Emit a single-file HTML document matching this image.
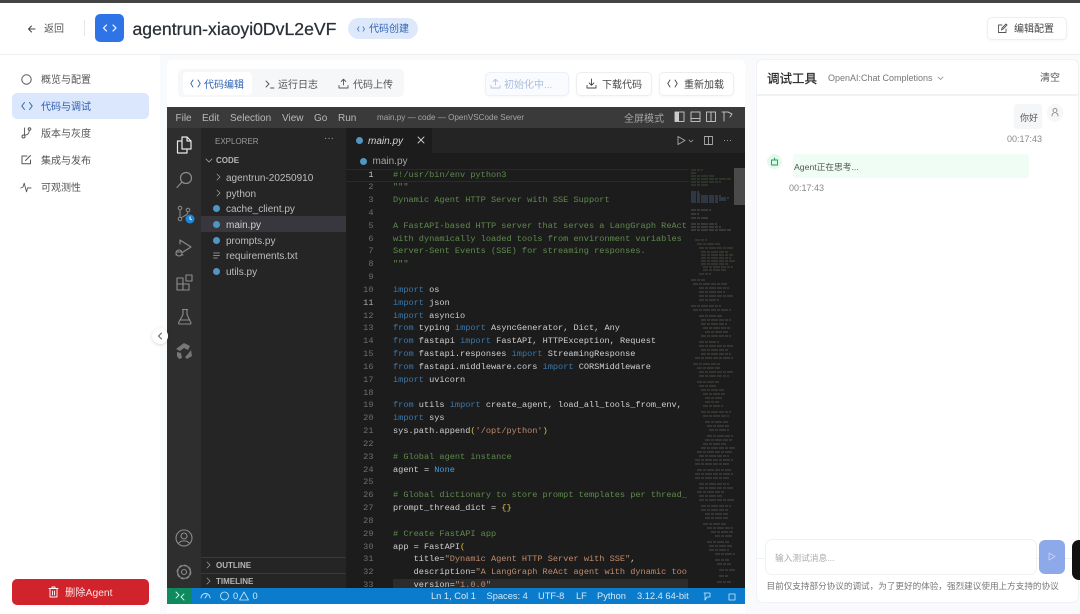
<!DOCTYPE html>
<html lang="zh"><head><meta charset="utf-8"><title>agentrun</title>
<style>
html,body{margin:0;padding:0;width:1080px;height:614px;overflow:hidden;background:#fff}
body{position:relative;font-family:"Liberation Sans","Noto Sans CJK SC",sans-serif;color:#444}
#w{position:absolute;left:0;top:0;width:1080px;height:614px;overflow:hidden;background:#fff;filter:blur(.3px)}
.a{position:absolute;white-space:nowrap}
.t{position:absolute;white-space:nowrap;line-height:14px;height:14px}
svg{position:absolute;overflow:visible}
.ln{fill:none;stroke:currentColor;stroke-linecap:round;stroke-linejoin:round}
.btn{position:absolute;background:#fff;border:1px solid #eceef1;border-radius:5px;box-sizing:border-box;box-shadow:0 1px 2px rgba(0,0,0,.04)}
.nav{font-size:10px;color:#555;left:41px}
.ex{font-size:10px;color:#bdbdbd;left:226px}
#code{position:absolute;left:393px;top:168.5px;width:295px;height:420px;overflow:hidden;margin:0;font:8.6px/12.83px "Liberation Mono",monospace;color:#cfcfcf}
#nums{position:absolute;left:346px;top:168.5px;width:27.5px;height:420px;overflow:hidden;margin:0;text-align:right;font:8.6px/12.83px "Liberation Mono",monospace;color:#6e6e6e}
.k{color:#3a78ad}.c{color:#5f8a4c}.s{color:#c08a6c}.b{color:#4a9ad4}.y{color:#e0c040}
.st{position:absolute;white-space:nowrap;font-size:9.3px;line-height:11px;color:#d5e8f7;top:591px}
.py{position:absolute;width:7px;height:7px;border-radius:50%;background:#4f97c2}
.m{position:absolute;white-space:nowrap;font-size:10px;color:#b8b8b8;top:112.500px}
</style></head><body><div id="w">
<div class="a" style="left:0;top:0;width:1080px;height:2.5px;background:#444"></div>
<div class="a" style="left:0;top:54px;width:1080px;height:1px;background:#eceef0"></div>
<div class="a" style="left:160px;top:55px;width:920px;height:559px;background:#f8fafc"></div>

<!-- header -->
<svg style="left:27px;top:24px" width="10" height="10" color="#444"><path class="ln" d="M8 5H1.500M4.500 2 1.500 5l3 3" stroke-width="1"/></svg>
<div class="t" style="left:44px;top:23px;font-size:10px;color:#555">返回</div>
<div class="a" style="left:84px;top:20px;width:1px;height:16px;background:#e5e7ea"></div>
<div class="a" style="left:95px;top:14px;width:29px;height:28px;border-radius:5px;background:#2f74e6"></div>
<svg style="left:102px;top:22px" width="16" height="12" color="#fff"><path class="ln" d="M4.500 3 1.500 6l3 3M11 3l3 3-3 3" stroke-width="1.200"/></svg>
<div class="a" style="left:132.500px;top:17px;font-size:17.650px;line-height:24px;color:#2a2f36;-webkit-text-stroke:.25px #2a2f36">agentrun-xiaoyi0DvL2eVF</div>
<div class="a" style="left:348px;top:18px;width:70px;height:21px;border-radius:11px;background:#dde9fb"></div>
<svg style="left:357px;top:26px" width="8" height="6" color="#3b6fc4"><path class="ln" d="M2 .8 .5 3 2 5.200M6 .8 7.500 3 6 5.200" stroke-width=".8"/></svg>
<div class="t" style="left:369px;top:23px;font-size:10px;color:#2f62b3">代码创建</div>
<div class="btn" style="left:987px;top:17px;width:80px;height:23px"></div>
<svg style="left:997px;top:23px" width="11" height="11" color="#555"><path class="ln" d="M9 6v3.500H1.500V2H5M4.500 7 5 5l4-4 1 1-4 4z" stroke-width=".9"/></svg>
<div class="t" style="left:1014px;top:23px;font-size:10px;color:#444">编辑配置</div>

<!-- left nav -->
<div class="a" style="left:12px;top:93px;width:137px;height:26px;border-radius:5px;background:#dae7fc"></div>
<svg style="left:21px;top:74px" width="11" height="11" color="#555"><circle class="ln" cx="5.500" cy="5.500" r="4.700" stroke-width="1"/></svg>
<div class="t nav" style="top:74px">概览与配置</div>
<svg style="left:21px;top:101px" width="12" height="10" color="#2f62b3"><path class="ln" d="M3.500 1.500 .8 5l2.700 3.500M8.500 1.500 11.200 5 8.500 8.500" stroke-width="1"/></svg>
<div class="t nav" style="top:101px;color:#2d5cb0">代码与调试</div>
<svg style="left:21px;top:127px" width="11" height="12" color="#555"><circle class="ln" cx="2.500" cy="9.500" r="1.500"/><circle class="ln" cx="8.500" cy="2" r="1.300"/><path class="ln" d="M3.500 1v7M3.500 8c4 0 4.500-2 4.800-4.500" stroke-width=".9"/></svg>
<div class="t nav" style="top:128px">版本与灰度</div>
<svg style="left:21px;top:154px" width="11" height="11" color="#555"><path class="ln" d="M9.500 6v3.800H1V2h5M4.500 6.500 9.500 1.500" stroke-width="1"/></svg>
<div class="t nav" style="top:155px">集成与发布</div>
<svg style="left:20px;top:182px" width="12" height="11" color="#555"><path class="ln" d="M.8 6 3 5l1.200-3.800 2.300 8.600 1.200-4 3.300.2" stroke-width=".9"/></svg>
<div class="t nav" style="top:182px">可观测性</div>
<div class="a" style="left:12px;top:579px;width:137px;height:26px;border-radius:5px;background:#d0232b"></div>
<svg style="left:48px;top:586px" width="11" height="12" color="#fff"><path class="ln" d="M1 2.500h9M4 2.500V1h3v1.500M2 2.500V11h7V2.500M4.500 5v4M6.500 5v4" stroke-width=".9"/></svg>
<div class="t" style="left:65px;top:586.500px;font-size:10.300px;color:#fbe3e3">删除Agent</div>

<!-- center card -->
<div class="a" style="left:167px;top:60px;width:578px;height:553px;border-radius:5px 5px 0 0;background:#fff"></div>
<div class="a" style="left:178px;top:69px;width:226px;height:28px;border-radius:5px;background:#f6f7f9"></div>
<div class="a" style="left:183px;top:72px;width:69px;height:23px;border-radius:4px;background:#fff"></div>
<svg style="left:190px;top:79px" width="11" height="9" color="#2f62b3"><path class="ln" d="M3 1 .8 4.500 3 8M8 1l2.200 3.500L8 8" stroke-width=".9"/></svg>
<div class="t" style="left:204px;top:79px;font-size:10px;color:#2f62b3">代码编辑</div>
<svg style="left:265px;top:80px" width="10" height="9" color="#555"><path class="ln" d="M1 1l3 3-3 3M5.500 8H9" stroke-width=".9"/></svg>
<div class="t" style="left:278px;top:79px;font-size:10px;color:#555">运行日志</div>
<svg style="left:338px;top:78px" width="11" height="11" color="#555"><path class="ln" d="M5.500 7V1.500M3.200 3.500l2.300-2.300 2.300 2.300M1 7.500V10h9V7.500" stroke-width=".9"/></svg>
<div class="t" style="left:353px;top:79px;font-size:10px;color:#555">代码上传</div>
<div class="btn" style="left:485px;top:72px;width:84px;height:24px;background:#fafbfe;border-color:#eaeff8"></div>
<svg style="left:490px;top:78px" width="11" height="11" color="#aec3e8"><path class="ln" d="M5.500 7V1.500M3.200 3.500l2.300-2.300 2.300 2.300M1 7.500V10h9V7.500" stroke-width=".9"/></svg>
<div class="t" style="left:504px;top:79px;font-size:10px;color:#a9bde0">初始化中...</div>
<div class="btn" style="left:576px;top:72px;width:76px;height:24px"></div>
<svg style="left:586px;top:78px" width="11" height="11" color="#444"><path class="ln" d="M5.500 1v6M3.200 5l2.300 2.300L7.800 5M1 7.500V10h9V7.500" stroke-width=".9"/></svg>
<div class="t" style="left:602px;top:79px;font-size:10px;color:#444">下载代码</div>
<div class="btn" style="left:659px;top:72px;width:75px;height:24px"></div>
<svg style="left:667px;top:79px" width="11" height="9" color="#444"><path class="ln" d="M3 1 .8 4.500 3 8M8 1l2.200 3.500L8 8" stroke-width=".9"/></svg>
<div class="t" style="left:684px;top:79px;font-size:10px;color:#444">重新加载</div>

<!-- vscode -->
<div class="a" style="left:167px;top:107px;width:578px;height:497px;background:#1c1c1c"></div>
<div class="a" style="left:167px;top:107px;width:578px;height:21px;background:#3a3a3a"></div>
<div class="a" style="left:167px;top:128px;width:34px;height:460px;background:#2e2e2e"></div>
<div class="a" style="left:201px;top:128px;width:145px;height:460px;background:#252526"></div>
<div class="a" style="left:346px;top:128px;width:399px;height:25px;background:#242425"></div>
<div class="a" style="left:346px;top:128px;width:86px;height:25px;background:#1c1c1c"></div>
<div class="m" style="left:175.500px">File</div><div class="m" style="left:202px">Edit</div><div class="m" style="left:230px">Selection</div><div class="m" style="left:282px">View</div><div class="m" style="left:314px">Go</div><div class="m" style="left:338px">Run</div>
<div class="m" style="left:377px;font-size:8.100px;top:113px;color:#a5a5a5">main.py — code — OpenVSCode Server</div>
<div class="m" style="left:624px;top:110px;color:#a5a5a5">全屏模式</div>
<svg style="left:674px;top:111px" width="70" height="12" color="#bbb"><rect class="ln" x="1" y="1" width="9" height="9.500"/><rect x="1" y="1" width="4" height="9.500" fill="#ccc"/><rect class="ln" x="17" y="1" width="9" height="9.500"/><path class="ln" d="M17 7.500h9"/><rect class="ln" x="32.500" y="1" width="9" height="9.500"/><path class="ln" d="M37 1v9.500M48 1h6M50 1v9M54 1l4 2-2 3"/></svg>
<!-- activity icons -->
<svg style="left:176px;top:136px" width="17" height="18" color="#e8e8e8"><path class="ln" d="M6 1h5l4 4v8H6zM6 5H1.500v12H11v-4M11 1v4h4" stroke-width="1.200"/></svg>
<svg style="left:176px;top:171px" width="17" height="18" color="#8c8c8c"><circle class="ln" cx="10" cy="7" r="5.500" stroke-width="1.200"/><path class="ln" d="M6 11 1 16.500" stroke-width="1.200"/></svg>
<svg style="left:177px;top:205px" width="18" height="19" color="#8c8c8c"><circle class="ln" cx="3" cy="3" r="1.800"/><circle class="ln" cx="3" cy="14" r="1.800"/><circle class="ln" cx="11" cy="5" r="1.800"/><path class="ln" d="M3 5v7M11 7c0 3-4 4-6.500 5.500"/><circle cx="13" cy="14" r="4.500" fill="#1e86d8"/><path d="M13 11.500V14l1.800 1" stroke="#fff" fill="none" stroke-width="1"/></svg>
<svg style="left:175px;top:239px" width="18" height="18" color="#8c8c8c"><path class="ln" d="M5 5V1l11 7-8 5M4 11a3 3 0 1 0 .1 0M1 13h6M1 16h1M7 16h1" stroke-width="1.100"/></svg>
<svg style="left:176px;top:274px" width="17" height="17" color="#8c8c8c"><path class="ln" d="M1 4h6v12H1zM1 10h12v6H7M10 1h6v6h-6z" stroke-width="1.100"/></svg>
<svg style="left:177px;top:308px" width="16" height="17" color="#8c8c8c"><path class="ln" d="M5.500 1.500h5M6 1.500v5L1.500 15c0 .5.500 1 1 1h10.500c.5 0 1-.5 1-1L10 6.500v-5M3.500 12h9" stroke-width="1.100"/></svg>
<svg style="left:175px;top:342px" width="18" height="18" color="#8c8c8c"><path d="M9 1l6 3-2 4-4-2-4 3-4-2zM2 10l4 1 1 5-3 1-2-3zM16 8l1 6-5 3-2-2 3-3z" fill="#777"/></svg>
<svg style="left:175px;top:529px" width="18" height="18" color="#8c8c8c"><circle class="ln" cx="9" cy="9" r="8" stroke-width="1.100"/><circle class="ln" cx="9" cy="7" r="3" stroke-width="1.100"/><path class="ln" d="M3.500 14.500c2-3.500 9-3.500 11 0" stroke-width="1.100"/></svg>
<svg style="left:175px;top:563px" width="18" height="18" color="#8c8c8c"><circle class="ln" cx="9" cy="9" r="2.500" stroke-width="1.100"/><circle class="ln" cx="9" cy="9" r="6.300" stroke-width="2.200" stroke-dasharray="2.600 2.350" opacity=".95"/><circle cx="9" cy="9" r="5.200" fill="none" stroke="#2e2e2e" stroke-width="1"/></svg>

<!-- explorer -->
<div class="t" style="left:215px;top:134.500px;font-size:8px;color:#9a9a9a">EXPLORER</div>
<div class="t" style="left:324px;top:132px;font-size:10px;color:#a0a0a0">···</div>
<svg style="left:205px;top:158px" width="8" height="6" color="#aaa"><path class="ln" d="M1 1l3 3 3-3" stroke-width=".8"/></svg>
<div class="t" style="left:216px;top:154px;font-size:8px;font-weight:bold;color:#b5b5b5">CODE</div>
<div class="a" style="left:201px;top:216px;width:145px;height:16px;background:#37373d"></div>
<svg style="left:216px;top:173px" width="6" height="8" color="#999"><path class="ln" d="M1 1l3 3-3 3" stroke-width=".8"/></svg>
<svg style="left:216px;top:189px" width="6" height="8" color="#999"><path class="ln" d="M1 1l3 3-3 3" stroke-width=".8"/></svg>
<div class="t ex" style="top:171.500px">agentrun-20250910</div>
<div class="t ex" style="top:187.500px">python</div>
<div class="py" style="left:213px;top:205px"></div><div class="t ex" style="top:203px">cache_client.py</div>
<div class="py" style="left:213px;top:220.500px"></div><div class="t ex" style="top:218.500px;color:#d0d0d0">main.py</div>
<div class="py" style="left:213px;top:236.500px"></div><div class="t ex" style="top:234.500px">prompts.py</div>
<svg style="left:213px;top:252px" width="7" height="7" color="#aaa"><path class="ln" d="M.5 1h6M.5 3.500h6M.5 6h4" stroke-width=".8"/></svg><div class="t ex" style="top:250px">requirements.txt</div>
<div class="py" style="left:213px;top:268px"></div><div class="t ex" style="top:266px">utils.py</div>
<div class="a" style="left:201px;top:557px;width:145px;height:1px;background:#3a3a3a"></div>
<div class="a" style="left:201px;top:573px;width:145px;height:1px;background:#3a3a3a"></div>
<svg style="left:206px;top:561px" width="6" height="8" color="#999"><path class="ln" d="M1 1l3 3-3 3" stroke-width=".8"/></svg>
<svg style="left:206px;top:577px" width="6" height="8" color="#999"><path class="ln" d="M1 1l3 3-3 3" stroke-width=".8"/></svg>
<div class="t" style="left:216px;top:558.500px;font-size:8px;font-weight:bold;color:#b5b5b5">OUTLINE</div>
<div class="t" style="left:216px;top:574.500px;font-size:8px;font-weight:bold;color:#b5b5b5">TIMELINE</div>

<!-- tab -->
<div class="py" style="left:356px;top:137px"></div>
<div class="t" style="left:368px;top:134.500px;font-size:10px;font-style:italic;color:#d5d5d5">main.py</div>
<svg style="left:417px;top:136px" width="8" height="8" color="#ccc"><path class="ln" d="M1 1l6 6M7 1 1 7" stroke-width=".9"/></svg>
<div class="py" style="left:360px;top:157.500px"></div>
<div class="t" style="left:372.500px;top:154.500px;font-size:10px;color:#a5a5a5">main.py</div>
<svg style="left:677px;top:135px" width="60" height="12" color="#aaa"><path class="ln" d="M1 1.500v8l7-4z" stroke-width=".9"/><path class="ln" d="M12 5l2 2 2-2" stroke-width=".7"/><rect class="ln" x="27.500" y="1.500" width="8" height="8" stroke-width=".9"/><path class="ln" d="M31.500 1.500v8" stroke-width=".9"/></svg>
<div class="t" style="left:723px;top:133px;font-size:9px;color:#aaa">···</div>

<!-- editor -->
<div class="a" style="left:346px;top:169px;width:343px;height:13px;border-top:1px solid #2a2a2a;border-bottom:1px solid #2a2a2a;box-sizing:border-box"></div>
<div class="a" style="left:393px;top:579px;width:295px;height:9px;background:#2c2c2c"></div>
<pre id="nums"><span style="color:#c8c8c8">1</span>
2
3
4
5
6
7
8
9
10
<span style="color:#aaa">11</span>
12
13
14
15
16
17
18
19
20
21
22
23
24
25
26
27
28
29
30
31
32
33</pre>
<pre id="code"><span class="c">#!/usr/bin/env python3</span>
<span class="c">"""</span>
<span class="c">Dynamic Agent HTTP Server with SSE Support</span>

<span class="c">A FastAPI-based HTTP server that serves a LangGraph ReAct</span>
<span class="c">with dynamically loaded tools from environment variables</span>
<span class="c">Server-Sent Events (SSE) for streaming responses.</span>
<span class="c">"""</span>

<span class="k">import</span> os
<span class="k">import</span> json
<span class="k">import</span> asyncio
<span class="k">from</span> typing <span class="k">import</span> AsyncGenerator, Dict, Any
<span class="k">from</span> fastapi <span class="k">import</span> FastAPI, HTTPException, Request
<span class="k">from</span> fastapi.responses <span class="k">import</span> StreamingResponse
<span class="k">from</span> fastapi.middleware.cors <span class="k">import</span> CORSMiddleware
<span class="k">import</span> uvicorn

<span class="k">from</span> utils <span class="k">import</span> create_agent, load_all_tools_from_env,
<span class="k">import</span> sys
sys.path.append<span class="y">(</span><span class="s">'/opt/python'</span><span class="y">)</span>

<span class="c"># Global agent instance</span>
agent = <span class="b">None</span>

<span class="c"># Global dictionary to store prompt templates per thread_</span>
prompt_thread_dict = <span class="y">{}</span>

<span class="c"># Create FastAPI app</span>
app = FastAPI<span class="y">(</span>
    title=<span class="s">"Dynamic Agent HTTP Server with SSE"</span>,
    description=<span class="s">"A LangGraph ReAct agent with dynamic too</span>
    version=<span class="s">"1.0.0"</span></pre>

<!-- minimap -->
<svg style="left:691px;top:168px;opacity:.6" width="43" height="420">
<g fill="none" stroke-width=".8" stroke-dasharray="5 1 3 1 7 1">
<path stroke="#66884f" d="M0 2h12M0 5h6M0 8h24M0 11h40M0 14h30M0 17h18"/>
<path stroke="#6f9ac2" d="M0 24h8M0 26h10M0 28h30M0 30h38M0 32h36M0 34h28"/>
<path stroke="#999" d="M0 42h20M0 46h8M0 50h18M0 56h26M0 59h30M0 62h40"/>
<path stroke="#85806a" d="M4 72h12M6 76h24M8 80h34M10 84h28M10 87h32M10 90h30M10 93h34M10 96h28M12 99h30M12 102h24M8 106h12"/>
<path stroke="#888" d="M0 112h14M2 116h34M8 120h30M8 124h26M8 128h34M8 132h20M0 138h30M2 142h38"/>
<path stroke="#8a8a78" d="M8 148h24M10 152h30M10 156h26M12 160h28M14 164h24M10 168h30M8 174h20M8 178h34M10 182h28M10 186h30M4 190h38"/>
<path stroke="#7f8a72" d="M2 196h28M6 200h24M8 204h34M8 208h30M6 214h22M8 218h18M10 222h24M12 226h22M14 230h18M14 234h14M12 238h20M10 244h30M12 248h26"/>
<path stroke="#858585" d="M14 254h24M16 258h22M18 262h20M16 268h26M14 272h28M12 276h24M10 280h34M6 284h36M8 288h30M4 292h38M4 296h34M6 302h34M4 306h38M4 310h34"/>
<path stroke="#8a8a80" d="M8 316h30M8 320h34M6 324h28M8 328h24M8 332h36M10 338h30M10 342h28M14 346h24M14 350h24M12 356h24M16 360h26M20 364h22M24 368h18M16 374h22M18 378h24M18 382h20M24 386h20M24 392h14M26 396h14M28 402h16M28 408h10M26 414h14"/>
</g></svg>
<div class="a" style="left:734px;top:168px;width:11px;height:37px;background:#4a4a4a"></div>

<!-- status bar -->
<div class="a" style="left:167px;top:588px;width:578px;height:16px;background:#0a7ccb"></div>
<div class="a" style="left:167px;top:588px;width:25px;height:16px;background:#0f8a5f"></div>
<svg style="left:175px;top:591px" width="10" height="10" color="#cfe"><path class="ln" d="M1 1l3 3-3 3M9 9 6 6l3-3" stroke-width=".9"/></svg>
<svg style="left:200px;top:592px" width="11" height="8" color="#d5e8f7"><path class="ln" d="M1 6a4.500 4.500 0 0 1 9 0M5 6l2-3" stroke-width=".9"/></svg>
<svg style="left:220px;top:591px" width="30" height="10" color="#d5e8f7"><circle class="ln" cx="4.500" cy="5" r="4" stroke-width=".8"/><path class="ln" d="M24 1l4.500 8h-9z" stroke-width=".8"/></svg>
<div class="st" style="left:233px">0</div><div class="st" style="left:252.500px">0</div>
<div class="st" style="left:431px">Ln 1, Col 1</div>
<div class="st" style="left:486.500px">Spaces: 4</div>
<div class="st" style="left:538px">UTF-8</div>
<div class="st" style="left:576px">LF</div>
<div class="st" style="left:597px">Python</div>
<div class="st" style="left:637px">3.12.4 64-bit</div>
<svg style="left:703px;top:592px" width="36" height="9" color="#d5e8f7"><path class="ln" d="M1 1h6v4H4L2 8V1M26 2h6v6h-6z" stroke-width=".8"/></svg>

<!-- collapse button -->
<div class="a" style="left:152px;top:328px;width:16px;height:16px;border-radius:50%;background:#fff;box-shadow:0 1px 3px rgba(0,0,0,.15)"></div>
<svg style="left:157px;top:332px" width="6" height="8" color="#555"><path class="ln" d="M4.500 1 1.500 4l3 3" stroke-width=".9"/></svg>

<!-- right panel -->
<div class="a" style="left:757px;top:60px;width:321px;height:542px;border-radius:6px;background:#fff;box-shadow:0 0 0 1px #f0f2f5"></div>
<div class="a" style="left:757px;top:94px;width:321px;height:1.500px;background:#f0f2f4"></div>
<div class="a" style="left:757px;top:558px;width:321px;height:1px;background:#eef0f3"></div>
<div class="t" style="left:767px;top:71.500px;font-size:12.500px;color:#222;-webkit-text-stroke:.2px #222">调试工具</div>
<div class="t" style="left:828px;top:71px;font-size:9px;color:#777">OpenAI:Chat Completions</div>
<svg style="left:937px;top:75.500px" width="7" height="5" color="#888"><path class="ln" d="M1 1l2.500 2.500L6 1" stroke-width=".8"/></svg>
<div class="t" style="left:1040px;top:71.500px;font-size:10px;color:#555">清空</div>
<div class="a" style="left:1014px;top:104px;width:28px;height:25px;border-radius:3px;background:#f5f6f7"></div>
<div class="t" style="left:1020px;top:110.500px;font-size:9px;color:#555">你好</div>
<div class="a" style="left:1047px;top:104px;width:16px;height:18px;border-radius:8px;background:#f6f7f9"></div>
<svg style="left:1051px;top:108px" width="9" height="9" color="#777"><circle class="ln" cx="4" cy="2.500" r="2" stroke-width=".8"/><path class="ln" d="M1 8c0-2 1-2.500 1.500-2.500M7 8c0-2-1-2.500-1.500-2.500" stroke-width=".8"/></svg>
<div class="t" style="left:1007px;top:132px;font-size:9px;color:#888">00:17:43</div>
<div class="a" style="left:767px;top:154px;width:15px;height:15px;border-radius:50%;background:#e3f9eb"></div>
<svg style="left:770px;top:157px" width="9" height="9" color="#1a9a5a"><rect class="ln" x="1.500" y="3" width="6" height="5" stroke-width=".9"/><path class="ln" d="M4.500 3V1" stroke-width=".9"/></svg>
<div class="a" style="left:793px;top:154px;width:236px;height:24px;border-radius:3px;background:#f0fdf4"></div>
<div class="t" style="left:794px;top:159.500px;font-size:8.700px;color:#555">Agent正在思考...</div>
<div class="t" style="left:789px;top:181px;font-size:9px;color:#888">00:17:43</div>
<div class="a" style="left:766px;top:540px;width:270px;height:34px;border-radius:6px;background:#fff;box-shadow:0 0 0 1px #f0f1f4;"></div>
<div class="t" style="left:775px;top:551px;font-size:8.700px;color:#aaa">输入测试消息...</div>
<div class="a" style="left:1039px;top:540px;width:26px;height:34px;border-radius:6px;background:#8ea9ea"></div>
<svg style="left:1048px;top:552px" width="8" height="10" color="#c8d6f6"><path class="ln" d="M1 1v7l6-3.500z" stroke-width=".8"/></svg>
<div class="t" style="left:766.500px;top:579px;font-size:8.600px;color:#777">目前仅支持部分协议的调试，为了更好的体验，强烈建议使用上方支持的协议</div>
<div class="a" style="left:1072px;top:540px;width:20px;height:40px;border-radius:7px;background:#111"></div>
</div></body></html>
